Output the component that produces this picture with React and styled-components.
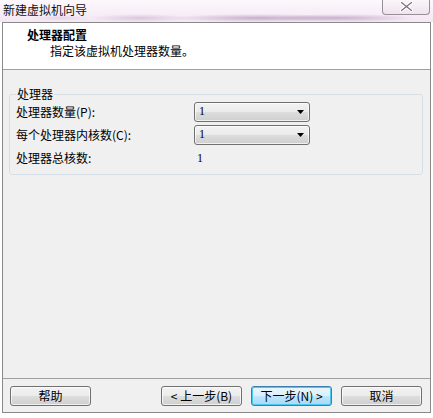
import styled, { createGlobalStyle } from "styled-components";

const GlobalStyle = createGlobalStyle`
  html, body {
    margin: 0;
    padding: 0;
    background: #ffffff;
  }
  body {
    font-family: "Noto Sans CJK SC", "DejaVu Sans", sans-serif;
    font-size: 12px;
    color: #000;
  }
`;

const Window = styled.div`
  width: 433px;
  height: 418px;
  display: flex;
  flex-direction: column;
  background: #ffffff;
  overflow: hidden;
`;

const TitleBar = styled.div`
  position: relative;
  height: 22px;
  display: flex;
  align-items: flex-start;
  padding-left: 3px;
  background:
    radial-gradient(ellipse 90px 4px at 260px 18px, rgba(110, 60, 120, 0.35), transparent),
    radial-gradient(ellipse 70px 4px at 345px 18px, rgba(110, 60, 120, 0.3), transparent),
    radial-gradient(ellipse 50px 4px at 140px 18px, rgba(140, 90, 150, 0.25), transparent),
    radial-gradient(ellipse 30px 3px at 60px 18px, rgba(140, 90, 150, 0.15), transparent),
    linear-gradient(180deg, #fdf8fd, #f3e7f3);
`;

const Title = styled.span`
  margin-top: 3px;
  font-size: 12px;
  line-height: 14px;
  color: #111;
`;

const CloseButton = styled.div`
  position: absolute;
  right: 3px;
  top: -1px;
  width: 46px;
  height: 15px;
  border: 1px solid #9a8e9a;
  border-top: none;
  border-radius: 0 0 4px 4px;
  background: linear-gradient(180deg, #fbf7fb, #eee4ee);
  display: flex;
  align-items: center;
  justify-content: center;
`;

const Client = styled.div`
  flex: 1;
  margin: 0 2px 5px 2px;
  border: 1px solid #8a8a8a;
  display: flex;
  flex-direction: column;
  background: #f0f0f0;
`;

const Header = styled.div`
  height: 47px;
  background: #ffffff;
  border-bottom: 1px solid #a0a0a0;
  padding: 4px 0 0 24px;
  box-sizing: border-box;
`;

const Heading = styled.div`
  font-weight: bold;
  font-size: 12px;
  line-height: 16px;
`;

const SubHeading = styled.div`
  font-size: 12px;
  line-height: 16px;
  padding-left: 23px;
`;

const Body = styled.div`
  flex: 1;
  padding: 17px 7px 0 6px;
`;

const GroupBox = styled.fieldset`
  margin: 0;
  padding: 0 0 8px 6px;
  border: 1px solid #d5dfe5;
  border-radius: 3px;
  height: 88px;
  box-sizing: border-box;
`;

const Legend = styled.legend`
  padding: 0 1px;
  margin-left: 0;
  font-size: 12px;
  line-height: 14px;
`;

const Row = styled.div`
  display: grid;
  grid-template-columns: 178px 116px;
  align-items: center;
  height: ${(p) => p.h || 24}px;
`;

const Label = styled.span`
  font-size: 12px;
  line-height: 14px;
`;

const Select = styled.div`
  height: 20px;
  box-sizing: border-box;
  border: 1px solid #707070;
  border-radius: 3px;
  background: linear-gradient(180deg, #f2f2f2 0%, #ebebeb 50%, #dddddd 51%, #cfcfcf 100%);
  box-shadow: inset 0 0 0 1px rgba(255, 255, 255, 0.7);
  display: flex;
  align-items: center;
  justify-content: space-between;
  padding: 0 5px 0 4px;
  font-family: "Liberation Serif", serif;
  font-size: 12px;
`;

const Value = styled.span`
  font-family: "Liberation Serif", serif;
  font-size: 12px;
  padding-left: 3px;
`;

const Footer = styled.div`
  height: 33px;
  border-top: 1px solid #a0a0a0;
  display: flex;
  align-items: center;
  padding: 0 8px 0 7px;
  gap: 9px;
`;

const Spacer = styled.div`
  flex: 1;
`;

const Button = styled.div`
  width: 81px;
  height: 20px;
  box-sizing: border-box;
  border: 1px solid ${(p) => (p.primary ? "#3c7fb1" : "#707070")};
  border-radius: 3px;
  background: ${(p) =>
    p.primary
      ? "linear-gradient(180deg, #eaf6fd 0%, #d9f0fc 50%, #bee6fd 51%, #a7d9f5 100%)"
      : "linear-gradient(180deg, #f2f2f2 0%, #ebebeb 50%, #dddddd 51%, #cfcfcf 100%)"};
  box-shadow: inset 0 0 0 1px ${(p) => (p.primary ? "#48c8f3" : "rgba(255,255,255,0.7)")};
  display: flex;
  align-items: center;
  justify-content: center;
  font-size: 12px;
  line-height: 14px;
  white-space: pre;
`;

const Arrow = () => (
  <svg width="7" height="4" viewBox="0 0 7 4">
    <path d="M0 0H7L3.5 4Z" fill="#000" />
  </svg>
);

const CloseIcon = () => (
  <svg width="13" height="11" viewBox="0 0 13 11">
    <path
      d="M1.5 1.5L11.5 9.5M11.5 1.5L1.5 9.5"
      stroke="#ffffff"
      strokeWidth="3.4"
      strokeLinecap="round"
    />
    <path
      d="M1.5 1.5L11.5 9.5M11.5 1.5L1.5 9.5"
      stroke="#7a6f7a"
      strokeWidth="1.2"
      strokeLinecap="round"
    />
  </svg>
);

export default function App() {
  return (
    <>
      <GlobalStyle />
      <Window>
        <TitleBar>
          <Title>新建虚拟机向导</Title>
          <CloseButton>
            <CloseIcon />
          </CloseButton>
        </TitleBar>
        <Client>
          <Header>
            <Heading>处理器配置</Heading>
            <SubHeading>指定该虚拟机处理器数量。</SubHeading>
          </Header>
          <Body>
            <GroupBox>
              <Legend>处理器</Legend>
              <Row h={21}>
                <Label>处理器数量(P):</Label>
                <Select>
                  1
                  <Arrow />
                </Select>
              </Row>
              <Row h={25}>
                <Label>每个处理器内核数(C):</Label>
                <Select>
                  1
                  <Arrow />
                </Select>
              </Row>
              <Row h={22}>
                <Label>处理器总核数:</Label>
                <Value>1</Value>
              </Row>
            </GroupBox>
          </Body>
          <Footer>
            <Button>帮助</Button>
            <Spacer />
            <Button>{"< 上一步(B)"}</Button>
            <Button primary>{"下一步(N) >"}</Button>
            <Button>取消</Button>
          </Footer>
        </Client>
      </Window>
    </>
  );
}
